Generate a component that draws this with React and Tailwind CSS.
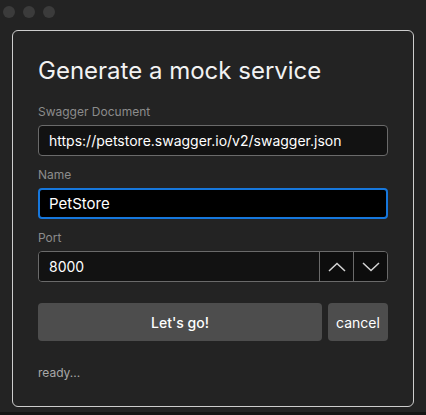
import React, { useState } from "react";

function Chevron({ up }) {
  return (
    <svg width="18" height="10" viewBox="0 0 18 10" fill="none">
      <path
        d={up ? "M1 9 L9 1.5 L17 9" : "M1 1 L9 8.5 L17 1"}
        stroke="#d4d4d4"
        strokeWidth="1.5"
      />
    </svg>
  );
}

function Field({ label, children, first }) {
  return (
    <div className={first ? "mt-[17px]" : "mt-[11px]"}>
      <p className="text-[12px] leading-[16px] text-[#8c8c8c] mb-[5px]">{label}</p>
      {children}
    </div>
  );
}

export default function App() {
  const [swagger, setSwagger] = useState("https://petstore.swagger.io/v2/swagger.json");
  const [name, setName] = useState("PetStore");
  const [port, setPort] = useState(8000);

  return (
    <div
      className="w-[426px] h-[415px] bg-[#232323] flex flex-col overflow-hidden"
      style={{ fontFamily: "Inter, 'Noto Sans', sans-serif" }}
    >
      <div className="flex gap-[8px] pl-[3px] pt-[6px] h-[30px]">
        <span className="w-[12px] h-[12px] rounded-full bg-[#3b3b3b]" />
        <span className="w-[12px] h-[12px] rounded-full bg-[#3b3b3b]" />
        <span className="w-[12px] h-[12px] rounded-full bg-[#3b3b3b]" />
      </div>

      <div className="ml-[12px] w-[402px] h-[377px] border border-[#cdcdcd] rounded-[6px] px-[25px] pt-[24px]">
        <h1 className="text-[24px] leading-[32px] text-[#f2f2f2] font-normal">Generate a mock service</h1>

        <Field label="Swagger Document" first>
          <input
            value={swagger}
            onChange={(e) => setSwagger(e.target.value)}
            className="w-full h-[31px] bg-[#121212] border border-[#6a6a6a] rounded-[4px] px-[10px] text-[14px] text-white outline-none"
          />
        </Field>

        <Field label="Name">
          <input
            value={name}
            onChange={(e) => setName(e.target.value)}
            className="w-full h-[31px] bg-black border-2 border-[#1677dc] rounded-[4px] px-[9px] text-[15px] text-white outline-none"
          />
        </Field>

        <Field label="Port">
          <div className="flex h-[31px] border border-[#6a6a6a] rounded-[4px] overflow-hidden">
            <input
              value={port}
              onChange={(e) => setPort(e.target.value)}
              className="flex-1 min-w-0 bg-[#121212] px-[10px] text-[14px] text-white outline-none"
            />
            <button
              onClick={() => setPort((p) => Number(p) + 1)}
              className="w-[34px] bg-[#0d0d0d] border-l border-[#6a6a6a] flex items-center justify-center"
            >
              <Chevron up />
            </button>
            <button
              onClick={() => setPort((p) => Number(p) - 1)}
              className="w-[34px] bg-[#0d0d0d] border-l border-[#6a6a6a] flex items-center justify-center"
            >
              <Chevron />
            </button>
          </div>
        </Field>

        <div className="flex gap-[6px] mt-[21px]">
          <button className="flex-1 h-[38px] bg-[#4d4d4d] rounded-[4px] text-[14px] font-medium text-white">
            Let's go!
          </button>
          <button className="w-[60px] h-[38px] bg-[#4d4d4d] rounded-[4px] text-[14px] text-white">
            cancel
          </button>
        </div>

        <p className="mt-[24px] text-[12px] leading-[16px] text-[#a8a8a8]">ready...</p>
      </div>

      <div className="mt-auto h-[3px] bg-[#141414]" />
    </div>
  );
}
